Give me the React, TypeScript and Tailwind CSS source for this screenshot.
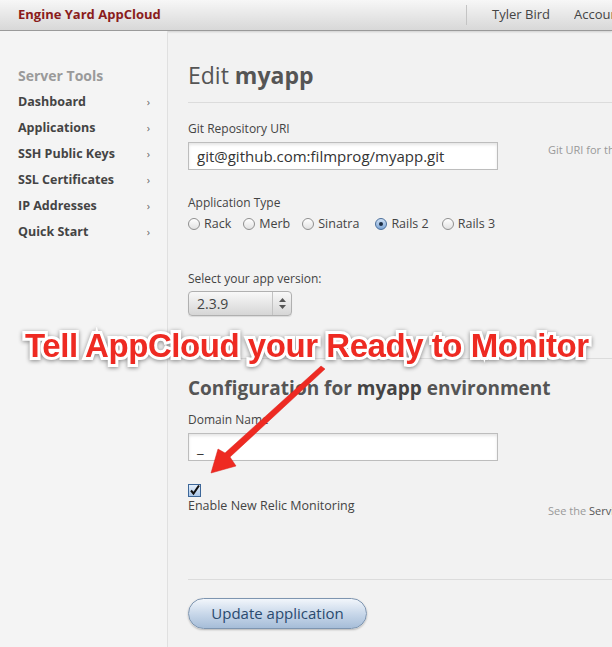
import React from "react";

const font = "font-['Open_Sans','Noto_Sans',sans-serif]";

function Radio({ label, checked }: { label: string; checked?: boolean }) {
  return (
    <div className="flex items-center gap-[4px]">
      <span
        className={
          "flex h-[12px] w-[12px] items-center justify-center rounded-full border " +
          (checked
            ? "border-[#4a6f9c] bg-gradient-to-b from-[#cfe0f3] to-[#7ea6d6]"
            : "border-[#8f8f8f] bg-gradient-to-b from-[#ffffff] to-[#e2e2e2]")
        }
      >
        {checked && <span className="h-[4px] w-[4px] rounded-full bg-[#1d2f45]" />}
      </span>
      <span>{label}</span>
    </div>
  );
}

export default function App() {
  const nav = ["Dashboard", "Applications", "SSH Public Keys", "SSL Certificates", "IP Addresses", "Quick Start"];
  return (
    <div className={`relative h-[647px] w-[612px] overflow-hidden bg-[#f2f2f2] ${font}`}>
      {/* Header */}
      <header className="flex h-[31px] items-center border-b border-[#9a9a9a] bg-gradient-to-b from-[#f7f7f7] to-[#d8d8d8] shadow-[0_1px_2px_rgba(0,0,0,0.15)]">
        <div className="pl-[18px] text-[13px] font-bold text-[#8a1c1c]">Engine Yard AppCloud</div>
        <div className="ml-auto flex h-full items-center">
          <div className="h-[20px] w-px bg-[#c4c4c4]" />
          <div className="ml-[25px] whitespace-nowrap text-[13px] text-[#444]">Tyler Bird</div>
          <div className="ml-[24px] w-[38px] overflow-hidden whitespace-nowrap text-[13px] text-[#444]">Account</div>
        </div>
      </header>

      <div className="flex h-[616px]">
        {/* Sidebar */}
        <aside className="w-[168px] shrink-0 border-r border-[#e0e0e0] bg-[#f4f4f4] pt-[34px]">
          <div className="pl-[18px] text-[14px] font-bold leading-[22px] text-[#9a9a9a]">Server Tools</div>
          <ul className="mt-[2px]">
            {nav.map((n) => (
              <li key={n} className="flex h-[26px] items-center justify-between pl-[18px] pr-[17px] text-[12.5px] font-bold text-[#444]">
                <span>{n}</span>
                <span className="text-[11px] font-normal text-[#666]">›</span>
              </li>
            ))}
          </ul>
        </aside>

        {/* Main */}
        <main className="min-w-0 flex-1 pl-[20px] pt-[27px] text-[#444]">
          <h1 className="text-[23px] leading-[34px] text-[#555]">
            Edit <span className="font-bold">myapp</span>
          </h1>
          <div className="mt-[10px] border-t border-[#dcdcdc]" />

          <div className="flex">
            <div className="w-[310px] shrink-0">
              <div className="mt-[18px] text-[12px] leading-[16px]">Git Repository URI</div>
              <div className="mt-[5px] flex h-[28px] items-center border border-[#bdbdbd] bg-white px-[8px] text-[15px] text-[#333] shadow-[inset_0_2px_3px_rgba(0,0,0,0.1)]">
                git@github.com:filmprog/myapp.git
              </div>
            </div>
            <div className="ml-[50px] mt-[39px] whitespace-nowrap text-[11px] text-[#999]">Git URI for the application</div>
          </div>

          <div className="mt-[25px] text-[12px] leading-[16px]">Application Type</div>
          <div className="mt-[4px] flex h-[18px] items-center gap-[12px] text-[12.5px] text-[#444]">
            <Radio label="Rack" />
            <Radio label="Merb" />
            <Radio label="Sinatra" />
            <span className="ml-[4px]"><Radio label="Rails 2" checked /></span>
            <span className="ml-[1px]"><Radio label="Rails 3" /></span>
          </div>

          <div className="mt-[38px] text-[12px] leading-[16px]">Select your app version:</div>
          <div className="mt-[4px] flex h-[25px] w-[104px] items-center rounded-[4px] border border-[#b0b0b0] bg-gradient-to-b from-[#f8f8f8] to-[#d6d6d6] shadow-[0_1px_1px_rgba(0,0,0,0.1)]">
            <span className="flex-1 pl-[8px] text-[14px] text-[#444]">2.3.9</span>
            <span className="flex h-full w-[19px] items-center justify-center border-l border-[#c2c2c2]">
              <svg width="7" height="11" viewBox="0 0 7 11">
                <path d="M3.5 0 L7 4 L0 4 Z M3.5 11 L7 7 L0 7 Z" fill="#555" />
              </svg>
            </span>
          </div>

          <div className="mt-[42px] border-t border-[#dcdcdc]" />

          <h2 className="mt-[16px] text-[19px] font-bold leading-[26px] text-[#555]">
            Configuration for <span className="text-[#444]">myapp</span> environment
          </h2>

          <div className="mt-[11px] text-[12px] leading-[16px]">Domain Name</div>
          <div className="mt-[5px] flex h-[28px] w-[310px] items-center border border-[#bdbdbd] bg-white px-[8px] text-[15px] text-[#333] shadow-[inset_0_2px_3px_rgba(0,0,0,0.1)]">
            _
          </div>

          <div className="flex h-[53px] items-start">
            <div className="w-[310px] shrink-0">
              <div className="mt-[23px] flex h-[13px] w-[13px] items-center justify-center border border-[#3d6799] bg-gradient-to-b from-[#e6f0fb] to-[#a9c6e8]">
                <svg width="11" height="11" viewBox="0 0 11 11">
                  <path d="M2 5.5 L4.5 8.5 L10 0.5" fill="none" stroke="#111" strokeWidth="2" />
                </svg>
              </div>
              <div className="mt-[1px] text-[12.5px] leading-[16px] text-[#444]">Enable New Relic Monitoring</div>
            </div>
            <div className="ml-[50px] mt-[42px] whitespace-nowrap text-[11px] leading-[16px] text-[#999]">
              See the <span className="text-[#555]">Service documentation</span>
            </div>
          </div>

          <div className="mt-[65px] border-t border-[#dcdcdc]" />

          <button className="mt-[18px] flex h-[31px] w-[179px] items-center justify-center rounded-full border border-[#7e95b0] bg-gradient-to-b from-[#f2f6fb] via-[#c9d8ea] to-[#a6bdd8] text-[15px] font-medium text-[#2a4a6e] shadow-[0_1px_2px_rgba(0,0,0,0.25)]">
            Update application
          </button>
        </main>
      </div>

      {/* Annotation overlay */}
      <div className="absolute left-[25px] top-[326px] whitespace-nowrap font-['Liberation_Sans',sans-serif] text-[33px] font-bold leading-[40px] tracking-[-0.45px] text-[#ee2a22] [-webkit-text-stroke:6px_white] [paint-order:stroke_fill] drop-shadow-[0_1px_2px_rgba(0,0,0,0.45)]">
        Tell AppCloud your Ready to Monitor
      </div>
      <svg className="absolute left-0 top-0" width="612" height="647" viewBox="0 0 612 647">
        <path d="M321 366 L325 369 L230 457 L236 466 L211 473 L218 449 L225 453 Z" fill="#ee2a22" stroke="#d8211a" strokeWidth="0.5" />
      </svg>
    </div>
  );
}
